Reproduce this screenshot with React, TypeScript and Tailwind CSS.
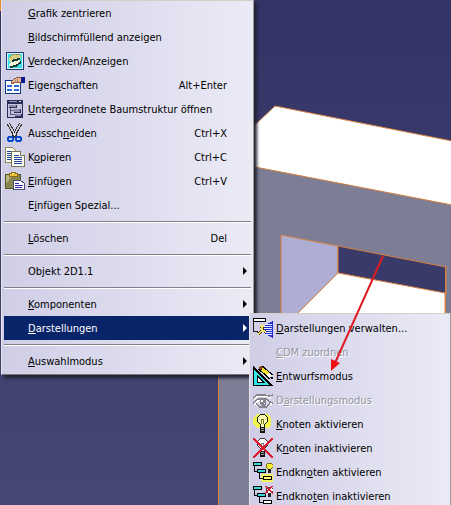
import type { ReactNode } from "react";

function Icon({ children }: { children: ReactNode }) {
  return (
    <svg viewBox="0 0 20 20" className="size-5" shapeRendering="crispEdges" aria-hidden="true">
      {children}
    </svg>
  );
}

const HideShow = () => (
  <Icon>
    <rect x="1" y="1" width="18" height="18" fill="#163b72" />
    <rect x="2" y="2" width="16" height="16" fill="#d8f4f8" />
    <rect x="3" y="3" width="14" height="14" fill="#3fe0ee" />
    <path d="M4 7l3-3 4-1h4l1 3-3 3-4 1-3 1-2-1z" fill="#d8cf86" />
    <path d="M4 7l3-3 4-1h4" stroke="#8f9452" fill="none" />
    <path d="M3 14l4-3 4-1 4-1 1 3-4 3-4 1-3-1z" fill="#f6f6dc" />
    <path d="M7 10l3-1 5-1M5 16l6-1 5-4" fill="none" stroke="#143c38" strokeWidth="2" />
  </Icon>
);

const Properties = () => (
  <Icon>
    <rect x="0" y="5" width="16" height="14" fill="#103a80" />
    <rect x="1" y="6" width="14" height="12" fill="#fff" />
    <path d="M2 11h5M9 11h5M2 15h5M9 15h5" stroke="#2a6ae0" strokeWidth="2" />
    <path d="M6 7l3-3 4-2h3v5l-3 1-3-1-3 2z" fill="#e8b694" stroke="#8c5a48" strokeWidth="1" />
    <path d="M10 5v3M12 4v4" stroke="#b57f66" />
    <rect x="16" y="2" width="4" height="6" fill="#0c1a90" />
  </Icon>
);

const Subtree = () => (
  <Icon>
    <rect x="2" y="1" width="16" height="18" fill="#2c2c58" />
    <rect x="3" y="5" width="14" height="13" fill="#c4c4dc" />
    <rect x="4" y="2" width="8" height="1" fill="#9c9cc8" />
    <rect x="14" y="2" width="2" height="1" fill="#d0d0e8" />
    <path d="M5.500 8v8M6 11.500h3M6 15.500h4" stroke="#55557c" fill="none" />
    <path d="M4 6h7v2H4zM9 10h6v3H9zM10 15h6v2h-6z" fill="#8c8cae" />
    <path d="M4 8.500h8M9 13.500h7M10 17.500h7M11.500 6v3M15.500 10v4M16.500 15v3" stroke="#2c2c58" />
  </Icon>
);

const Scissors = () => (
  <Icon>
    <path d="M3 0l8 14M16 0L8 14" stroke="#333" strokeWidth="3.500" />
    <path d="M3 0l7 12M16 0L9 12" stroke="#d0d0d4" strokeWidth="1.500" />
    <circle cx="5.500" cy="16" r="2.500" fill="#b9d4ff" stroke="#0b49c8" strokeWidth="2" />
    <circle cx="13.500" cy="16" r="2.500" fill="#b9d4ff" stroke="#0b49c8" strokeWidth="2" />
    <rect x="9" y="11" width="1" height="2" fill="#fff" />
  </Icon>
);

const Copy = () => (
  <Icon>
    <path d="M.5 .5h7l3 3v12h-10z" fill="#fffff2" stroke="#8a8a68" />
    <path d="M2 4.500h4M2 6.500h5M2 8.500h5M2 10.500h5M2 12.500h5" stroke="#1d3f9c" />
    <path d="M6.500 4.500h9l4 4v11h-13z" fill="#fffff2" stroke="#77775a" />
    <path d="M15.500 4.500v4h4" fill="#ddd" stroke="#77775a" />
    <path d="M9 8.500h5M9 10.500h8M9 12.500h8M9 14.500h8M9 16.500h8" stroke="#1d3f9c" />
  </Icon>
);

const Paste = () => (
  <Icon>
    <rect x="0" y="3" width="16" height="15" fill="#56562c" />
    <rect x="1" y="4" width="14" height="13" fill="#87864e" />
    <path d="M1 4h7L1 13z" fill="#b6b480" />
    <path d="M4 5V2h2V1h4v1h2v3z" fill="#e9c43a" stroke="#8f6b12" strokeWidth="1" />
    <rect x="7" y="2" width="2" height="1" fill="#fff3a8" />
    <path d="M8.500 9.500h7l4 3v6h-11z" fill="#fff" stroke="#4c4c78" />
    <path d="M10 12.500h4M10 14.500h8M10 16.500h7" stroke="#2525a8" />
  </Icon>
);

const ManageViews = () => (
  <Icon>
    <path d="M.5 3v10.500H5" stroke="#222" fill="none" />
    <rect x="0" y="0" width="13" height="4" fill="#000" />
    <rect x="1" y="1" width="11" height="2" fill="#fff" />
    <path d="M11 7l8-3v15l-8-3z" fill="#e4e8ff" />
    <path d="M15 5.500h4M12 7.500h7M11 9.500h8M11 11.500h8M11 13.500h8M12 15.500h7M15 17.500h4" stroke="#1d2fd0" strokeWidth="1" />
    <path d="M19.500 3v17M17 4.500h2M17 18.500h2" stroke="#1d2fd0" />
    <path d="M9 8v5l-4 3M9 12l4 2M7 8h4" stroke="#3c3200" strokeWidth="3" fill="none" />
    <path d="M9 8v5l-4 3M9 12l4 2M7 8h4" stroke="#f5e36a" strokeWidth="1.500" fill="none" />
  </Icon>
);

const Draft = () => (
  <Icon>
    <path d="M0 0l20 20H0z" fill="#000" />
    <path d="M1 3l15 16H1z" fill="#35e4ea" />
    <path d="M4 9l8 8H4z" fill="#000" />
    <path d="M5 12l4 4H5z" fill="#fff" />
    <path d="M7 1l11 10" stroke="#000" strokeWidth="6" />
    <path d="M9 3l6 5" stroke="#f7e52c" strokeWidth="3.500" />
    <path d="M7 1l2 2" stroke="#86421c" strokeWidth="3" />
    <path d="M15 8l3 3" stroke="#fff" strokeWidth="3" />
    <rect x="18" y="11" width="2" height="2" fill="#000" />
  </Icon>
);

const Eye = () => (
  <Icon>
    <path d="M1 9l5-3h7l5 2M2 14l5-5h6l5 5-5 3H7z" stroke="#fff" strokeWidth="2" fill="none" />
    <path d="M0 8l4-3h8l4 1 4-1M0 13l5-4h8l4 3 3 1M3 14l4 3h6l4-3" stroke="#85858c" strokeWidth="1.500" fill="none" />
    <path d="M7 9h6v5l-2 2H9l-2-2z" fill="#85858c" />
    <rect x="8" y="10" width="2" height="2" fill="#fff" />
    <rect x="11" y="13" width="1" height="1" fill="#fff" />
  </Icon>
);

const BulbBase = () => (
  <>
    <rect x="7" y="13" width="5" height="6" fill="#111" />
    <path d="M8 14.500h3M8 16.500h3" stroke="#a8a8a8" />
  </>
);

const BulbOn = () => (
  <Icon>
    <path d="M5 0h9l4 4v7l-3 3H4l-4-4V4z" fill="#f2f24c" />
    <path d="M7.500 .5h4l3 3v4l-3 3v3h-4v-3l-3-3v-4z" fill="#ffffb4" stroke="#1b1b00" />
    <path d="M8.500 10V5.500h2V10" stroke="#77771c" fill="none" />
    <BulbBase />
  </Icon>
);

const BulbOff = () => (
  <Icon>
    <path d="M7.500 .5h4l3 3v4l-3 3v3h-4v-3l-3-3v-4z" fill="#fff" stroke="#333" />
    <path d="M8.500 10V5.500h2V10" stroke="#777" fill="none" />
    <BulbBase />
    <path d="M0 0l20 20M20 0L0 20" stroke="#d81f32" strokeWidth="1.500" />
  </Icon>
);

function TreeNodes({ active }: { active: boolean }) {
  return (
    <Icon>
      {active && <path d="M9 12h11v7l-1 1H9l-1-1v-6z" fill="#f5f45c" />}
      <path d="M1.500 4v5.500H5M6.500 11v5.500H11" stroke="#000" fill="none" />
      <rect x=".5" y=".5" width="8" height="3" fill="#35d6da" stroke="#000" />
      <rect x="4.500" y="7.500" width="8" height="3" fill="#35d6da" stroke="#000" />
      <rect x="10.500" y="14.500" width="8" height="3" fill={active ? "#ffff60" : "#fff"} stroke="#000" />
      <path d="M15 1h3l2 2v2l-2 2h-3l-2-2V3z" fill={active ? "#f5ee30" : "#fff"} stroke={active ? "#77701c" : "#444"} />
      <rect x="15" y="7" width="3" height="4" fill="#222" />
      {!active && <path d="M12 0l8 7M20 0l-8 7" stroke="#d81f32" strokeWidth="1.500" />}
    </Icon>
  );
}

/* The accelerator letter follows an ampersand in each label. */
function Label({ text }: { text: string }) {
  const at = text.indexOf("&");
  if (at < 0) return <>{text}</>;
  return (
    <>
      {text.slice(0, at)}
      <span className="underline decoration-1 underline-offset-1 [text-decoration-skip-ink:none]">
        {text[at + 1]}
      </span>
      {text.slice(at + 2)}
    </>
  );
}

type ItemProps = {
  label: string;
  icon?: ReactNode;
  shortcut?: string;
  submenu?: boolean;
  open?: boolean;
  disabled?: boolean;
};

function Item({ label, icon, shortcut, submenu, open, disabled }: ItemProps) {
  const tone = open
    ? "bg-[#0a246a] text-white"
    : disabled
      ? "text-[#94949c] [text-shadow:1px_1px_0_white]"
      : "text-black";
  return (
    <button
      type="button"
      role="menuitem"
      disabled={disabled}
      aria-haspopup={submenu ? "menu" : undefined}
      aria-expanded={submenu ? !!open : undefined}
      className={`flex h-6 w-full items-center whitespace-nowrap pr-1 text-left ${tone}`}
    >
      <span className="flex w-6 shrink-0 pl-px">{icon}</span>
      <span className="flex-1 pt-0.5">
        <Label text={label} />
      </span>
      {shortcut && <span className="pt-0.5 pr-5">{shortcut}</span>}
      {submenu && (
        <svg viewBox="0 0 4 8" className="h-2 w-1" aria-hidden="true">
          <path d="M0 0l4 4-4 4z" fill="currentColor" />
        </svg>
      )}
    </button>
  );
}

const Separator = () => (
  <div role="separator" className="flex h-[9px] flex-col justify-center">
    <div className="h-0.5 border-t border-b border-t-[#808088] border-b-white" />
  </div>
);

const panel =
  "border border-t-[#d4d0c8] border-l-[#e8e6e2] border-r-[#9a9a98] border-b-[#77777a] bg-linear-to-r from-[#cfcee6] via-[#dddcee] to-[#ebebf6]";

function Scene() {
  return (
    <svg
      viewBox="0 0 451 505"
      preserveAspectRatio="xMinYMin slice"
      className="absolute inset-0 size-full"
      aria-hidden="true"
    >
      <defs>
        <linearGradient id="sky" x1="0" y1="0" x2="0" y2="1">
          <stop offset="0" stopColor="#333366" />
          <stop offset="1" stopColor="#464774" />
        </linearGradient>
      </defs>
      <rect width="451" height="505" fill="url(#sky)" />
      <path d="M0 0v10h3M0 4h3" stroke="#e98a3a" strokeWidth="2" fill="none" />
      <path d="M218 160l37 7 197 38v301H218z" fill="#7d7d96" />
      <g stroke="#d5803f" strokeWidth="1">
        <path d="M218 160l57-54 177 35v64l-197-38z" fill="#fff" />
        <path d="M281 235l57 11v27l-41 41h-16z" fill="#aeaed4" />
        <path d="M338 246l108 21v27l-108-21z" fill="#3a3a6a" />
        <path d="M338 273l107 20v22H296z" fill="#fff" />
        <path d="M445.500 266v60M218.500 160v346" fill="none" />
      </g>
    </svg>
  );
}

export default function App() {
  return (
    <main className="relative h-screen overflow-hidden bg-[#464774] text-[11px] leading-4 [font-family:Tahoma,'DejaVu_Sans_Condensed','DejaVu_Sans',sans-serif]">
      <Scene />
      <div
        role="menu"
        aria-label="Kontextmenü"
        className={`relative ml-px w-[253px] px-0.5 pb-px shadow-[3px_3px_3px_#222233] ${panel}`}
      >
        <Item label="&Grafik zentrieren" />
        <Item label="&Bildschirmfüllend anzeigen" />
        <Item label="&Verdecken/Anzeigen" icon={<HideShow />} />
        <Item label="Eigen&schaften" icon={<Properties />} shortcut="Alt+Enter" />
        <Item label="&Untergeordnete Baumstruktur öffnen" icon={<Subtree />} />
        <Item label="Aussch&neiden" icon={<Scissors />} shortcut="Ctrl+X" />
        <Item label="K&opieren" icon={<Copy />} shortcut="Ctrl+C" />
        <Item label="&Einfügen" icon={<Paste />} shortcut="Ctrl+V" />
        <Item label="E&infügen Spezial..." />
        <Separator />
        <Item label="&Löschen" shortcut="Del" />
        <Separator />
        <Item label="Objekt 2D1.1" submenu />
        <Separator />
        <Item label="&Komponenten" submenu />
        <div className="relative">
          <Item label="&Darstellungen" submenu open />
          <div
            role="menu"
            aria-label="Darstellungen"
            className={`absolute -top-[3px] left-[245px] z-10 w-[202px] px-0.5 py-0.5 ${panel}`}
          >
            <Item label="&Darstellungen verwalten..." icon={<ManageViews />} />
            <Item label="&CDM zuordnen" disabled />
            <Item label="&Entwurfsmodus" icon={<Draft />} />
            <Item label="D&arstellungsmodus" icon={<Eye />} disabled />
            <Item label="&Knoten aktivieren" icon={<BulbOn />} />
            <Item label="K&noten inaktivieren" icon={<BulbOff />} />
            <Item label="Endkn&oten aktivieren" icon={<TreeNodes active />} />
            <Item label="Endkno&ten inaktivieren" icon={<TreeNodes active={false} />} />
          </div>
        </div>
        <Separator />
        <Item label="&Auswahlmodus" submenu />
      </div>
      {/* Pointer from the model opening to the draft mode entry */}
      <svg
        viewBox="0 0 54 116"
        className="pointer-events-none absolute top-[255px] left-[330px] z-20 h-[116px] w-[54px]"
        aria-hidden="true"
      >
        <path d="M53 1L5 108" stroke="#dc1c24" strokeWidth="2" />
        <path d="M1 116V104l9 4z" fill="#ee1118" />
      </svg>
    </main>
  );
}
